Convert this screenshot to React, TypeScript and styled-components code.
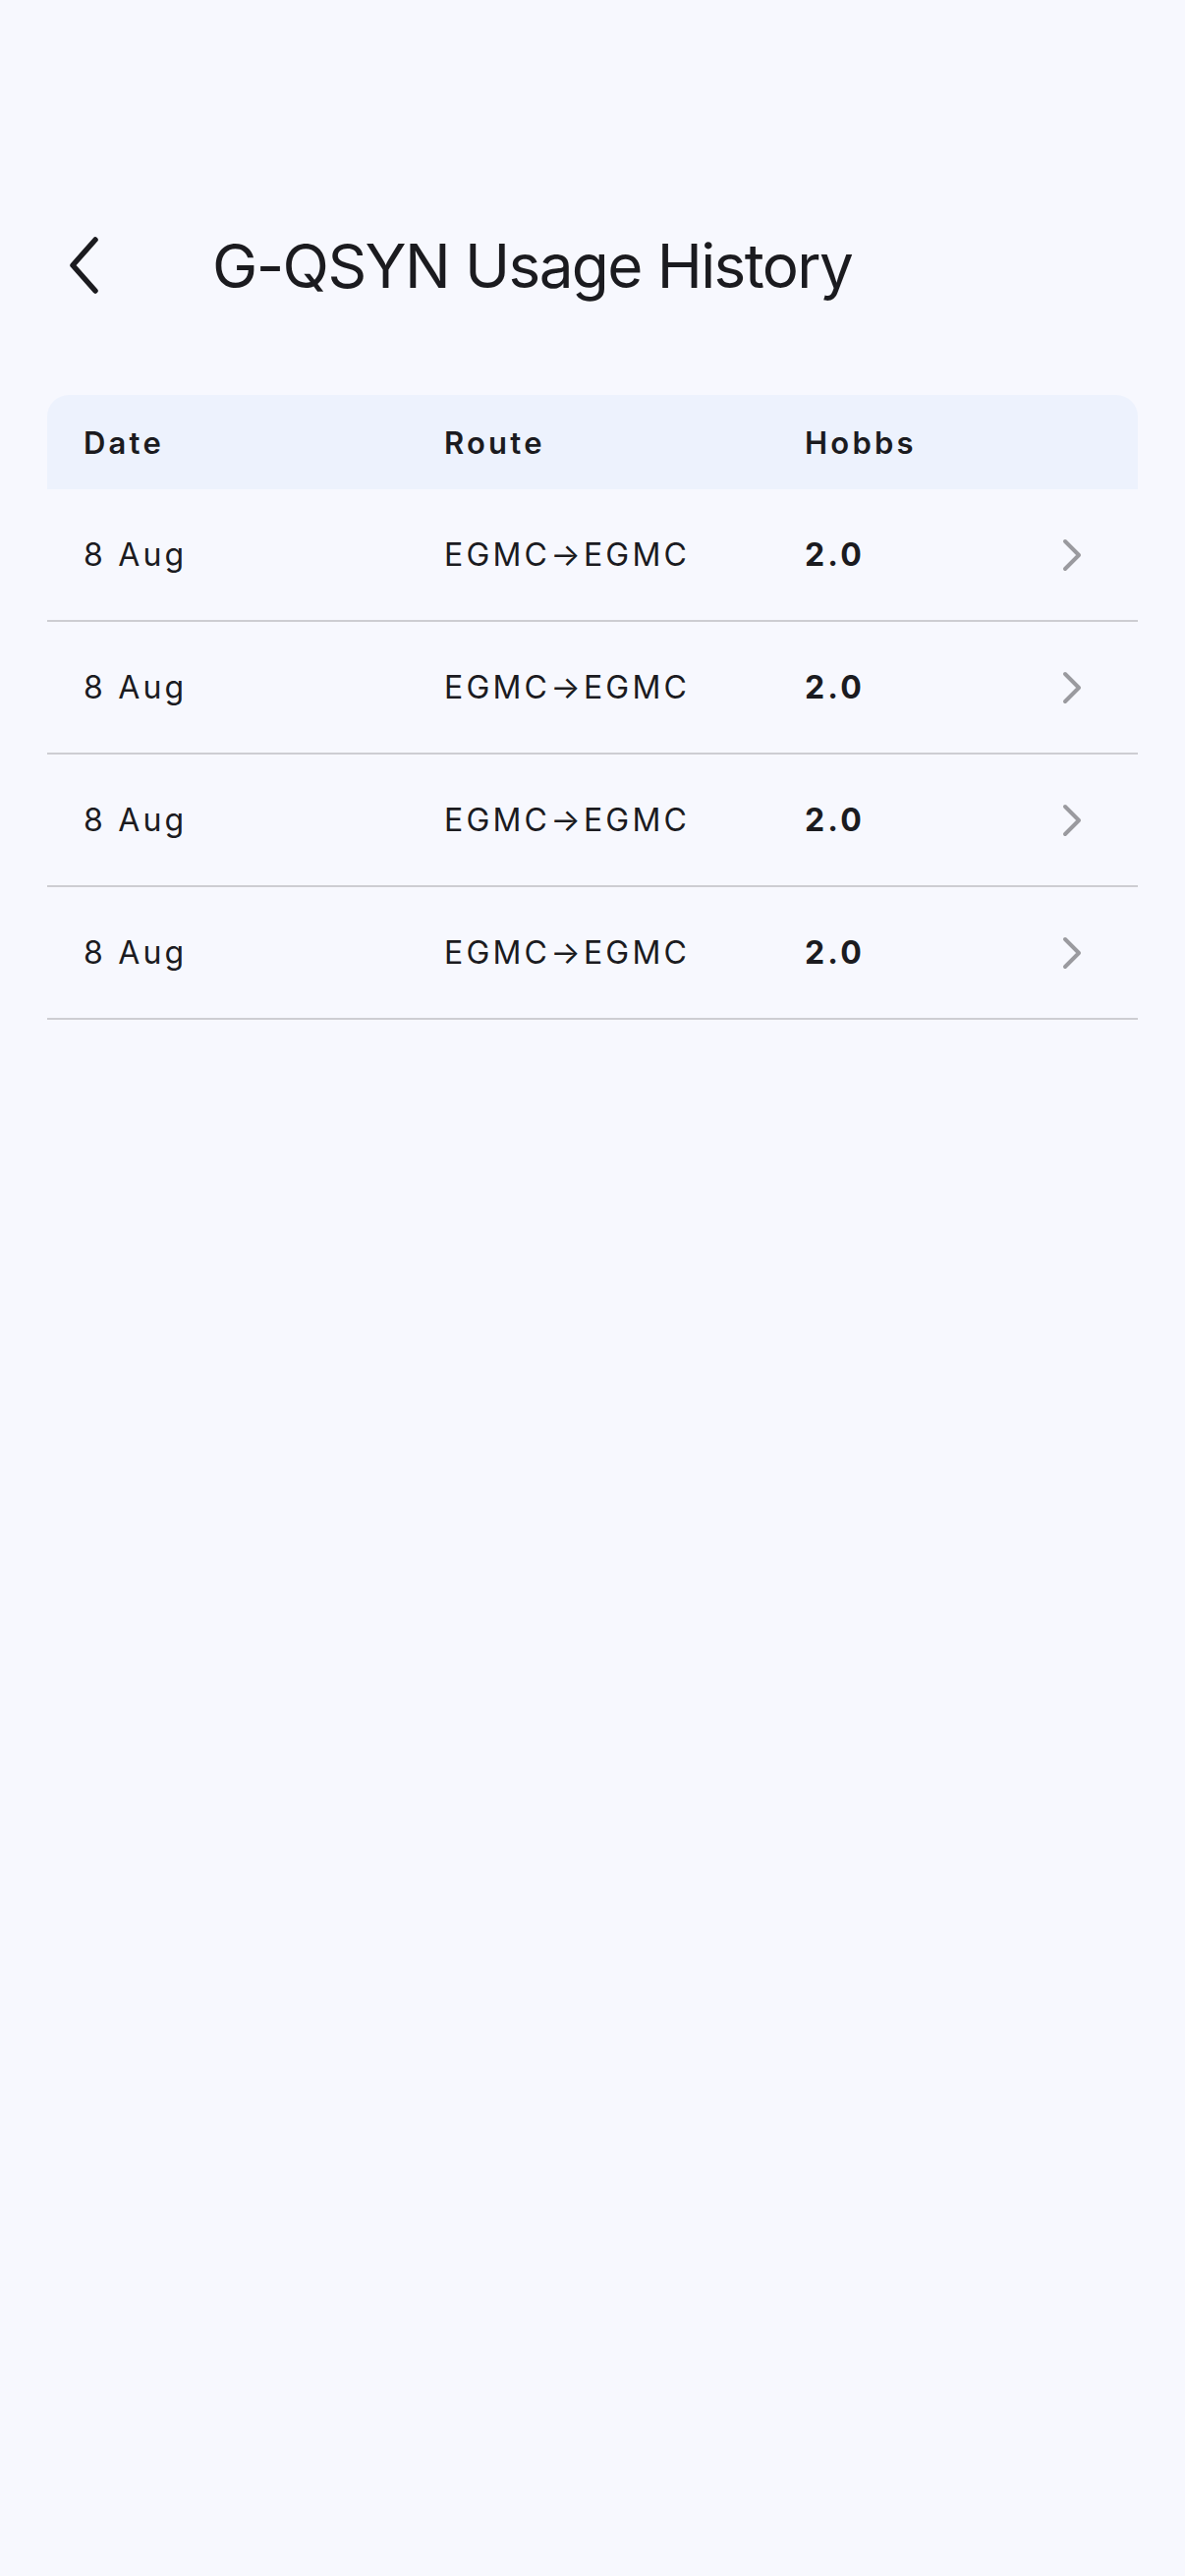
import React from 'react';
import styled, {createGlobalStyle} from 'styled-components';

const GlobalStyle = createGlobalStyle`
  html, body {
    margin: 0;
    padding: 0;
    background: #f7f8fe;
  }
  body {
    font-family: 'Inter', 'Roboto', sans-serif;
    color: #1b1b1f;
  }
`;

const usage = [
  {date: '8 Aug', from: 'EGMC', to: 'EGMC', hobbs: '2.0'},
  {date: '8 Aug', from: 'EGMC', to: 'EGMC', hobbs: '2.0'},
  {date: '8 Aug', from: 'EGMC', to: 'EGMC', hobbs: '2.0'},
  {date: '8 Aug', from: 'EGMC', to: 'EGMC', hobbs: '2.0'},
];

const App = () => {
  return (
    <Page>
      <GlobalStyle />
      <TopBar>
        <BackButton aria-label="Back">
          <svg width="36" height="60" viewBox="0 0 36 60" fill="none">
            <path
              d="M31 4 L8 30 L31 56"
              stroke="#1b1b1f"
              strokeWidth="5.5"
              strokeLinecap="round"
              strokeLinejoin="round"
            />
          </svg>
        </BackButton>
        <Title>G-QSYN Usage History</Title>
      </TopBar>

      <Table>
        <HeadRow>
          <HeadCell>Date</HeadCell>
          <HeadCell>Route</HeadCell>
          <HeadCell>Hobbs</HeadCell>
          <span />
        </HeadRow>
        {usage.map((item, index) => (
          <Row key={index}>
            <Cell>{item.date}</Cell>
            <Cell>
              {item.from}→{item.to}
            </Cell>
            <Cell $bold>{item.hobbs}</Cell>
            <Chevron>
              <svg width="22" height="34" viewBox="0 0 22 34" fill="none">
                <path
                  d="M5 3 L19 17 L5 31"
                  stroke="#9a9a9f"
                  strokeWidth="4"
                  strokeLinecap="round"
                  strokeLinejoin="round"
                />
              </svg>
            </Chevron>
          </Row>
        ))}
      </Table>
    </Page>
  );
};

export default App;

const Page = styled.div`
  min-height: 2622px;
  background: #f7f8fe;
  padding: 215px 48px 0 48px;
  box-sizing: border-box;
`;

const TopBar = styled.div`
  display: flex;
  align-items: center;
  height: 110px;
  gap: 112px;
  padding-left: 16px;
  margin-bottom: 77px;
`;

const BackButton = styled.button`
  display: flex;
  align-items: center;
  justify-content: center;
  background: none;
  border: none;
  padding: 0;
  width: 40px;
  height: 60px;
  cursor: pointer;
`;

const Title = styled.h1`
  margin: 0;
  font-size: 62px;
  font-weight: 400;
  letter-spacing: -1.6px;
  color: #1b1b1f;
`;

const Table = styled.div`
  display: flex;
  flex-direction: column;
`;

const HeadRow = styled.div`
  display: grid;
  grid-template-columns: 367px 367px 1fr auto;
  align-items: center;
  height: 96px;
  padding: 0 57px 0 37px;
  background: #edf2fd;
  border-radius: 22px 22px 0 0;
`;

const HeadCell = styled.div`
  font-size: 31px;
  font-weight: 600;
  letter-spacing: 3.2px;
  color: #1b1b1f;
`;

const Row = styled.div`
  display: grid;
  grid-template-columns: 367px 367px 1fr auto;
  align-items: center;
  height: 133px;
  padding: 0 57px 0 37px;
  border-bottom: 2px solid #cdcdd2;
`;

const Cell = styled.div<{$bold?: boolean}>`
  font-size: 32px;
  font-weight: ${(p) => (p.$bold ? 700 : 400)};
  letter-spacing: 3.2px;
  color: #1b1b1f;
`;

const Chevron = styled.div`
  display: flex;
  align-items: center;
  width: 22px;
`;
